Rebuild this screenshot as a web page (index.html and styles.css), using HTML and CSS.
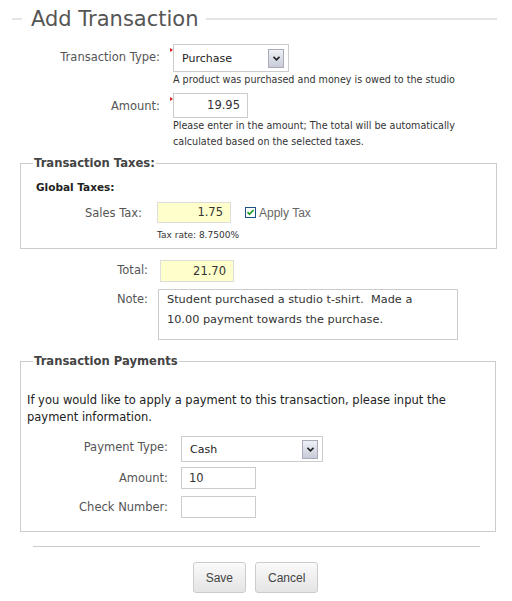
FILE: index.html
```html
<!DOCTYPE html>
<html>
<head>
<meta charset="utf-8">
<link rel="stylesheet" href="styles.css">
</head>
<body>
<div class="page">
  <h1 class="title"><span class="title-line short"></span><span class="title-text">Add Transaction</span><span class="title-line long"></span></h1>

  <div class="row row-main">
    <label class="lbl">Transaction Type:</label>
    <div class="ctl">
      <div class="req">
        <div class="select sel-type"><span class="sel-text">Purchase</span><span class="sel-btn"><svg width="7" height="5" viewBox="0 0 7 5"><path d="M0.5 0.8 L3.5 3.8 L6.5 0.8" fill="none" stroke="#222" stroke-width="1.6"/></svg></span></div>
      </div>
      <div class="help">A product was purchased and money is owed to the studio</div>
    </div>
  </div>

  <div class="row row-main row-amount">
    <label class="lbl">Amount:</label>
    <div class="ctl">
      <div class="req"><div class="input num amount">19.95</div></div>
      <div class="help">Please enter in the amount; The total will be automatically<br>calculated based on the selected taxes.</div>
    </div>
  </div>

  <fieldset class="box taxes">
    <legend>Transaction Taxes:</legend>
    <div class="subhead">Global Taxes:</div>
    <div class="row row-tax">
      <label class="lbl">Sales Tax:</label>
      <div class="ctl">
        <div class="inline">
          <div class="input num yellow">1.75</div>
          <span class="check"><svg width="11" height="11" viewBox="0 0 11 11"><rect x="0.5" y="0.5" width="10" height="10" fill="#fff" stroke="#1c5180"/><path d="M2.5 5.2 L4.5 7.3 L8.5 3" fill="none" stroke="#21a121" stroke-width="1.8"/></svg></span>
          <span class="check-lbl">Apply Tax</span>
        </div>
        <div class="rate">Tax rate: 8.7500%</div>
      </div>
    </div>
  </fieldset>

  <div class="row row-total">
    <label class="lbl">Total:</label>
    <div class="ctl"><div class="input num yellow">21.70</div></div>
  </div>
  <div class="row row-note">
    <label class="lbl">Note:</label>
    <div class="ctl"><div class="textarea">Student purchased a studio t-shirt.&nbsp; Made a<br>10.00 payment towards the purchase.</div></div>
  </div>

  <fieldset class="box payments">
    <legend>Transaction Payments</legend>
    <p class="intro">If you would like to apply a payment to this transaction, please input the payment information.</p>
    <div class="row row-pay row-pay-type">
      <label class="lbl">Payment Type:</label>
      <div class="ctl"><div class="select sel-pay"><span class="sel-text">Cash</span><span class="sel-btn"><svg width="7" height="5" viewBox="0 0 7 5"><path d="M0.5 0.8 L3.5 3.8 L6.5 0.8" fill="none" stroke="#222" stroke-width="1.6"/></svg></span></div></div>
    </div>
    <div class="row row-pay">
      <label class="lbl">Amount:</label>
      <div class="ctl"><div class="input plain">10</div></div>
    </div>
    <div class="row row-pay">
      <label class="lbl">Check Number:</label>
      <div class="ctl"><div class="input plain"></div></div>
    </div>
  </fieldset>

  <hr class="sep">
  <div class="buttons">
    <button class="btn">Save</button>
    <button class="btn">Cancel</button>
  </div>
</div>
</body>
</html>
```
FILE: styles.css
```css
* { box-sizing: border-box; }
html, body { margin: 0; padding: 0; background: #fff; }
body {
  font-family: "DejaVu Sans", Verdana, sans-serif;
  font-size: 11.5px;
  color: #555;
}
.page { padding: 0 15px 0 12px; width: 512px; }

.title {
  display: flex;
  align-items: center;
  margin: 0;
  height: 38px;
  font-weight: normal;
  font-size: 21px;
  color: #555;
}
.title-line { display: block; height: 2px; background: #e4e4e4; }
.title-line.short { width: 10px; }
.title-line.long { flex: 1; }
.title-text { padding: 0 8px 0 9px; }

.row { display: grid; column-gap: 13px; }
.lbl { text-align: right; color: #555; }
.row-main { grid-template-columns: 148px 1fr; margin-top: 6px; }
.row-main .lbl { padding-top: 6px; }
.row-amount { margin-top: 5px; }

.req { position: relative; }
.req::before {
  content: "";
  position: absolute;
  left: -3px; top: 4px;
  border-top: 2px solid transparent;
  border-bottom: 2px solid transparent;
  border-left: 3px solid #d02020;
}

.select {
  display: flex;
  align-items: center;
  justify-content: space-between;
  border: 1px solid #ccc;
  background: #fff;
  color: #222;
  font-size: 11px;
  padding: 0 4px 0 8px;
}
.sel-type { width: 116px; height: 28px; }
.sel-btn {
  width: 16px; height: 19px;
  border: 1px solid #aab;
  background: linear-gradient(#eef0f6, #c8ccd8);
  display: flex; align-items: center; justify-content: center;
}

.help { font-size: 9.6px; color: #333; line-height: 16px; }

.input {
  border: 1px solid #ccc;
  background: #fff;
  color: #333;
  font-size: 11.5px;
  width: 75px;
  height: 23px;
  line-height: 21px;
  padding: 0 7px;
}
.num { text-align: right; }
.amount { height: 25px; line-height: 23px; }
.yellow { background: #ffffcc; border-color: #ddd; }
.plain { height: 22px; line-height: 20px; }

.box {
  border: 1px solid #ccc;
  margin: 0 0 0 8px;
  padding: 0;
}
.box legend { color: #444; font-weight: bold; font-size: 11.6px; padding: 0 1px; margin-left: 12px; }
.taxes { margin-top: 6px; height: 93px; width: 477px; }
.subhead { font-weight: bold; color: #222; font-size: 10.5px; margin: 11px 0 0 15px; }
.row-tax { grid-template-columns: 121px 1fr; column-gap: 15px; margin-top: 9px; }
.row-tax .lbl { padding-top: 4px; }
.inline { display: flex; align-items: center; }
.inline .input { width: 74px; height: 21px; line-height: 19px; }
.check { margin-left: 14px; height: 11px; display: block; }
.check svg { display: block; }
.check-lbl { font-family: "Liberation Sans", Arial, sans-serif; font-size: 12px; color: #666; margin-left: 3px; }
.rate { font-size: 9px; color: #333; margin-top: 7px; }

.row-total { grid-template-columns: 136px 1fr; column-gap: 12px; margin-top: 11px; }
.row-total .lbl { padding-top: 3px; }
.row-total .input { height: 22px; width: 74px; line-height: 20px; }
.row-note { grid-template-columns: 136px 1fr; column-gap: 10px; margin-top: 7px; }
.row-note .lbl { padding-top: 3px; }
.textarea {
  border: 1px solid #ccc;
  width: 300px; height: 51px;
  color: #333;
  font-size: 11.3px;
  line-height: 20px;
  padding: 0 8px;
}

.payments { margin-top: 14px; width: 476px; height: 178px; }
.intro { color: #222; font-size: 11.5px; line-height: 17px; margin: 24px 0 10px 6px; }
.row-pay { grid-template-columns: 147px 1fr; column-gap: 13px; margin-bottom: 7px; }
.row-pay-type { margin-bottom: 5px; }
.row-pay .lbl { padding-top: 4px; }
.sel-pay { width: 142px; height: 26px; }
.row-pay .input { width: 75px; }

.sep { border: 0; border-top: 1px solid #ccc; margin: 14px 17px 0 21px; }
.buttons { display: flex; justify-content: center; gap: 9px; margin-top: 15px; padding-left: 2px; }
.btn {
  font-family: "Liberation Sans", Arial, sans-serif;
  font-size: 12px;
  color: #444;
  height: 31px;
  padding: 0 12px;
  border: 1px solid #ccc;
  border-radius: 3px;
  background: linear-gradient(#fafafa, #e4e4e4);
}
```
